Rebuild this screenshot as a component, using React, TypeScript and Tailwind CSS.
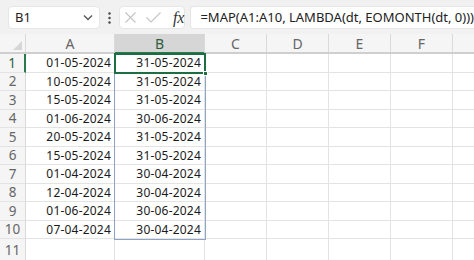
import React from "react";

const A = ["01-05-2024","10-05-2024","15-05-2024","01-06-2024","20-05-2024","15-05-2024","01-04-2024","12-04-2024","01-06-2024","07-04-2024"];
const B = ["31-05-2024","31-05-2024","31-05-2024","30-06-2024","31-05-2024","31-05-2024","30-04-2024","30-04-2024","30-06-2024","30-04-2024"];
const heights = [19,18,19,18,19,18,19,18,19,18,30];

const font = { fontFamily: '"Noto Sans", "Open Sans", sans-serif' };

export default function App() {
  return (
    <div className="w-[474px] h-[260px] overflow-hidden bg-white relative" style={font}>
      {/* toolbar */}
      <div className="h-[34px] bg-[#f1f1f1] flex items-center pl-[8px] pt-[1px]">
        <div className="w-[98px] h-[23px] bg-white rounded-[4px] flex items-center justify-between pl-[6px] pr-[6px] border border-[#e6e6e6]">
          <span className="text-[13px] text-[#222]">B1</span>
          <svg width="10" height="7" viewBox="0 0 10 7"><path d="M1 1.5 L5 5.5 L9 1.5" fill="none" stroke="#555" strokeWidth="1.3"/></svg>
        </div>
        <div className="w-[21px] flex justify-center">
          <svg width="3" height="12" viewBox="0 0 3 12"><circle cx="1.5" cy="1.5" r="1.2" fill="#444"/><circle cx="1.5" cy="6" r="1.2" fill="#444"/><circle cx="1.5" cy="10.5" r="1.2" fill="#444"/></svg>
        </div>
        <div className="w-[70px] h-[23px] bg-white rounded-[4px] flex items-center border border-[#e6e6e6]">
          <svg className="ml-[5px]" width="11" height="11" viewBox="0 0 11 11"><path d="M0.5 0.5 L10.5 10.5 M10.5 0.5 L0.5 10.5" stroke="#c4c4c4" strokeWidth="1.1"/></svg>
          <svg className="ml-[10px]" width="15" height="11" viewBox="0 0 15 11"><path d="M0.5 5.5 L5 10 L14.5 0.5" fill="none" stroke="#c4c4c4" strokeWidth="1.1"/></svg>
          <span className="ml-[12px] text-[16px] italic text-[#333] leading-none" style={{ fontFamily: '"Liberation Serif", serif' }}>fx</span>
        </div>
        <div className="ml-[5px] flex-1 h-[23px] bg-white rounded-l-[4px] flex items-center pl-[9px] border border-r-0 border-[#e6e6e6]">
          <span className="text-[13px] text-[#222] whitespace-nowrap">=MAP(A1:A10, LAMBDA(dt, EOMONTH(dt, 0)))</span>
        </div>
      </div>

      {/* grid */}
      <div className="relative">
        {/* header row */}
        <div className="flex h-[20px] bg-[#f5f5f5] border-b-2 border-[#cfcfcf] text-[14px] text-[#666]">
          <div className="w-[26px] shrink-0 relative border-r border-[#dadada]">
            <svg className="absolute right-[3px] bottom-[2px]" width="9" height="9" viewBox="0 0 9 9"><path d="M9 0 L9 9 L0 9 Z" fill="#d6d6d6"/></svg>
          </div>
          <div className="w-[89px] shrink-0 flex items-center justify-center border-r border-[#dadada]">A</div>
          <div className="w-[90px] shrink-0 flex items-center justify-center bg-[#d6d6d6] text-[#2d5e41] border-r border-[#dadada] relative">
            B
            <div className="absolute left-0 right-0 bottom-[-2px] h-[2px] bg-[#2a7a4b]" />
          </div>
          <div className="w-[62px] shrink-0 flex items-center justify-center border-r border-[#dadada]">C</div>
          <div className="w-[62px] shrink-0 flex items-center justify-center border-r border-[#dadada]">D</div>
          <div className="w-[62px] shrink-0 flex items-center justify-center border-r border-[#dadada]">E</div>
          <div className="w-[62px] shrink-0 flex items-center justify-center border-r border-[#dadada]">F</div>
          <div className="flex-1" />
        </div>

        {heights.map((h, i) => (
          <div key={i} className="flex" style={{ height: h }}>
            <div className={`w-[26px] shrink-0 bg-[#f5f5f5] flex items-center justify-center text-[13.5px] border-b border-[#e3e3e3] ${i === 0 ? "border-r-2 border-r-[#2a7a4b] text-[#2d5e41] bg-[#e6e6e6]" : "border-r border-r-[#dadada] text-[#666]"}`}>
              <span className={h > 20 ? "self-start mt-[1px]" : ""}>{i + 1}</span>
            </div>
            <div className="w-[89px] shrink-0 flex items-center justify-end pr-[3px] border-r border-b border-[#e3e3e3] text-[12px] tracking-[0.2px] text-[#1a1a1a]">{A[i] ?? ""}</div>
            <div className="w-[90px] shrink-0 flex items-center justify-end pr-[3px] border-r border-b border-[#e3e3e3] text-[12px] tracking-[0.2px] text-[#1a1a1a]">{B[i] ?? ""}</div>
            <div className="w-[62px] shrink-0 border-r border-b border-[#e3e3e3]" />
            <div className="w-[62px] shrink-0 border-r border-b border-[#e3e3e3]" />
            <div className="w-[62px] shrink-0 border-r border-b border-[#e3e3e3]" />
            <div className="w-[62px] shrink-0 border-r border-b border-[#e3e3e3]" />
            <div className="flex-1 border-b border-[#e3e3e3]" />
          </div>
        ))}

        {/* spill range border */}
        <div className="absolute left-[114px] top-[20px] w-[92px] h-[186px] border border-[#8fa3c4] pointer-events-none" />
        {/* active cell */}
        <div className="absolute left-[114px] top-[19px] w-[92px] h-[21px] border-2 border-[#1f6e43] pointer-events-none" />
        <div className="absolute left-[203px] top-[37px] w-[5px] h-[5px] bg-[#1f6e43] border border-white pointer-events-none" />
      </div>
    </div>
  );
}
